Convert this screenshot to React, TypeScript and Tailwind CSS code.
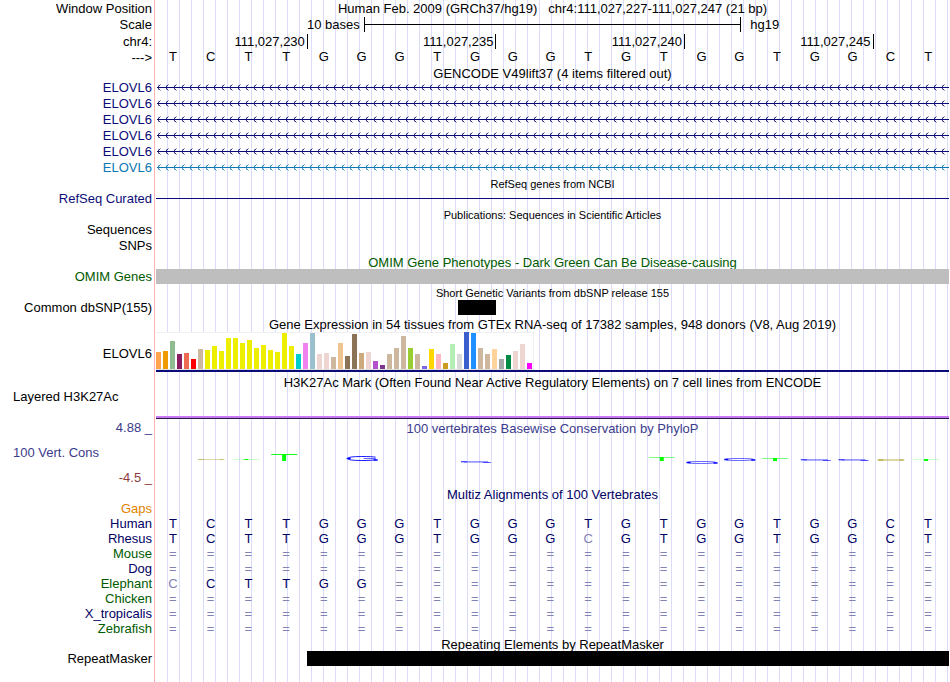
import React, { useId } from "react";

const SEQUENCE = "TCTTGGGTGGGTGTGGTGGCT";

const TICKS = ["111,027,230", "111,027,235", "111,027,240", "111,027,245"];

// [height, colour] for each of the 54 tissues
const TISSUES: [number, string][] = [
  [17, "#ffa54f"], [18, "#ee9a00"], [28, "#8fbc8f"], [15, "#8b1c62"], [16, "#ee6a50"], [10, "#ff0000"],
  [20, "#cdb79e"], [19, "#eeee00"], [23, "#eeee00"], [18, "#eeee00"], [31, "#eeee00"], [31, "#eeee00"],
  [26, "#eeee00"], [29, "#eeee00"], [21, "#eeee00"], [24, "#eeee00"], [19, "#eeee00"], [17, "#eeee00"],
  [36, "#eeee00"], [23, "#eeee00"], [15, "#00cdcd"], [26, "#ee82ee"], [36, "#9ac0cd"], [15, "#eed5d2"],
  [16, "#eed5d2"], [12, "#cdb79e"], [26, "#eec591"], [13, "#8b7355"], [35, "#8b7355"], [16, "#cdaa7d"],
  [17, "#eed5d2"], [8, "#b452cd"], [4, "#7a378b"], [15, "#cdb79e"], [21, "#cdb79e"], [33, "#cdb79e"],
  [21, "#9acd32"], [15, "#cdb79e"], [3, "#7a67ee"], [20, "#ffd700"], [15, "#ffb6c1"], [6, "#cd9b1d"],
  [25, "#b4eeb4"], [15, "#d9d9d9"], [37, "#3a5fcd"], [36, "#1e90ff"], [21, "#cdb79e"], [15, "#cdb79e"],
  [20, "#ffd39b"], [10, "#a6a6a6"], [14, "#008b45"], [18, "#eed5d2"], [25, "#eed5d2"], [6, "#ff00ff"],
];

// conservation marks: base index, kind, top and height inside the track
const MARKS: { at: number; kind: "T" | "G" | "C"; y: number; h: number }[] = [
  { at: 1, kind: "C", y: 24, h: 1 },
  { at: 2, kind: "T", y: 24, h: 1 },
  { at: 3, kind: "T", y: 19, h: 7 },
  { at: 5, kind: "G", y: 21, h: 5 },
  { at: 8, kind: "G", y: 26, h: 2 },
  { at: 13, kind: "T", y: 22, h: 4 },
  { at: 14, kind: "G", y: 26, h: 3 },
  { at: 15, kind: "G", y: 23, h: 3 },
  { at: 16, kind: "T", y: 23, h: 3 },
  { at: 17, kind: "G", y: 24, h: 2 },
  { at: 18, kind: "G", y: 24, h: 2 },
  { at: 19, kind: "C", y: 24, h: 2 },
  { at: 20, kind: "T", y: 24, h: 2 },
];

const NAVY = "text-[#000064]";
const GREEN = "text-[#005a00]";

const ALIGNMENTS = [
  { name: "Gaps", color: "text-[#e18200]", seq: "                     " },
  { name: "Human", color: NAVY, seq: SEQUENCE },
  { name: "Rhesus", color: NAVY, seq: "TCTTGGGTGGGcGTGGTGGCT" },
  { name: "Mouse", color: GREEN, seq: "=====================" },
  { name: "Dog", color: NAVY, seq: "=====================" },
  { name: "Elephant", color: GREEN, seq: "cCTTGG===============" },
  { name: "Chicken", color: GREEN, seq: "=====================" },
  { name: "X_tropicalis", color: NAVY, seq: "=====================" },
  { name: "Zebrafish", color: GREEN, seq: "=====================" },
];

type RowProps = {
  label?: string;
  labelClass?: string;
  className?: string;
  children?: React.ReactNode;
};

const Row = ({ label, labelClass = "text-right", className = "h-4", children }: RowProps) => (
  <div className={`flex ${className}`}>
    <div className={`w-[154px] shrink-0 pr-[2px] whitespace-pre ${labelClass}`}>{label}</div>
    <div className="min-w-0 flex-1 pl-[2px]">{children}</div>
  </div>
);

type TitleProps = { label?: string; labelClass?: string; className?: string; children: React.ReactNode };

const Title = ({ label, labelClass, className = "", children }: TitleProps) => (
  <Row label={label} labelClass={labelClass} className="h-[15px]">
    <h2 className={`pt-px text-center whitespace-pre ${className}`}>{children}</h2>
  </Row>
);

const Intron = ({ className }: { className: string }) => {
  const id = useId();
  return (
    <svg className={`block h-[15px] w-full ${className}`} shapeRendering="crispEdges" aria-hidden="true">
      <defs>
        <pattern id={id} width="8" height="15" patternUnits="userSpaceOnUse">
          <path d="M2 6h1v1h-1z M2 8h1v1h-1z M3 5h1v1h-1z M3 9h1v1h-1z" fill="currentColor" opacity="0.85" />
          <path d="M4 4h1v1h-1z M4 10h1v1h-1z M2 5h1v1h-1z M2 9h1v1h-1z" fill="currentColor" opacity="0.4" />
        </pattern>
      </defs>
      <rect width="100%" height="15" fill={`url(#${id})`} />
      <rect x="1" y="7" width="100%" height="1" fill="currentColor" />
    </svg>
  );
};

const Mark = ({ kind, h }: { kind: "T" | "G" | "C"; h: number }) => {
  if (kind === "T") {
    return (
      <g fill="#00ff00">
        <rect x="-15" width="26" height="1" opacity={h > 4 ? 0.9 : h > 2 ? 0.5 : 0.2} />
        <rect x="-4" width="4" height={h} />
      </g>
    );
  }
  if (kind === "C") {
    return (
      <g fill="#a8a020">
        <rect x="-13" width="27" height={h} opacity="0.4" />
        <rect x="-12" width="5" height={h} opacity="0.5" />
        <rect x="9" width="4" height={h} opacity="0.4" />
      </g>
    );
  }
  if (h < 3) {
    return (
      <g fill="#0000ff">
        <rect x="-14" width="27" height="1" opacity="0.4" />
        <rect x="-11" y="1" width="25" height="1" opacity="0.3" />
        <rect x="-14" width="6" height="1.5" opacity="0.5" />
        <rect x="8" y="1" width="8" height="1" opacity="0.6" />
      </g>
    );
  }
  return (
    <g fill="none" stroke="#0000ff">
      <path
        d={`M14 1.2 Q11 0.5 0 0.5 Q-14 0.5 -14 ${h / 2} Q-14 ${h - 0.5} 0 ${h - 0.5} Q12 ${h - 0.5} 14 ${h - 1.5}`}
        strokeWidth={h > 3 ? 0.9 : 0.6}
      />
      <path d={`M-15 ${h / 2} H-11 M12 ${h - 1} H16`} strokeWidth="1.5" />
      {h > 3 && <path d={`M2 ${h / 2} H14`} strokeWidth="0.6" />}
    </g>
  );
};

const App = () => {
  return (
    <main className="min-h-screen bg-white bg-[linear-gradient(#ffb4b4,#ffb4b4),repeating-linear-gradient(to_right,#dcdcfa_0_1px,transparent_1px_12px)] bg-[size:1px_100%,100%_100%] bg-[position:154px_0,167px_0] bg-no-repeat pr-px font-['Liberation_Sans',Arial,sans-serif] text-[13px] leading-[15px] text-black">
      {/* position, scale and ruler */}
      <Row label="Window Position" className="h-[17px] pt-px">
        <h1 className="text-center whitespace-pre">
          {"Human Feb. 2009 (GRCh37/hg19)   chr4:111,027,227-111,027,247 (21 bp)"}
        </h1>
      </Row>
      <Row label="Scale">
        <div className="grid h-[15px] grid-cols-[11fr_20fr_11fr]">
          <div className="pr-1 text-right">10 bases</div>
          <div className="flex items-center border-x border-black">
            <div className="h-px w-full bg-black"></div>
          </div>
          <div className="pl-[9px]">hg19</div>
        </div>
      </Row>
      <Row label="chr4:" className="h-4 pt-px">
        <div className="grid h-[15px] grid-cols-[4fr_5fr_5fr_5fr_2fr] pl-px text-right">
          {TICKS.map((t) => (
            <div key={t} className="border-r border-black pr-[2px]">{t}</div>
          ))}
        </div>
      </Row>
      <div className="flex h-4 pr-[2px]">
        <div className="w-[154px] shrink-0 pt-px pr-[2px] text-right">{"--->"}</div>
        <div className="grid flex-1 grid-cols-21 text-center">
          {SEQUENCE.split("").map((b, i) => (
            <span key={i}>{b}</span>
          ))}
        </div>
      </div>

      {/* genes */}
      <Title>GENCODE V49lift37 (4 items filtered out)</Title>
      {[1, 2, 3, 4, 5].map((n) => (
        <Row key={n} label="ELOVL6" labelClass="text-right text-[#0c0c78]">
          <Intron className="text-[#0c0c78]" />
        </Row>
      ))}
      <Row label="ELOVL6" labelClass="text-right text-[#0c78b4]">
        <Intron className="text-[#0c78b4]" />
      </Row>
      <Title className="text-[11px]">RefSeq genes from NCBI</Title>
      <Row label="RefSeq Curated" labelClass="text-right text-[#0c0c78]">
        <div className="flex h-[15px] items-center">
          <div className="h-px w-full bg-[#0c0c78]"></div>
        </div>
      </Row>

      {/* publications, phenotypes and variants */}
      <Title className="text-[11px]">Publications: Sequences in Scientific Articles</Title>
      <Row label="Sequences" />
      <Row label="SNPs" />
      <Title className="text-[#005a00]">OMIM Gene Phenotypes - Dark Green Can Be Disease-causing</Title>
      <Row label="OMIM Genes" labelClass="text-right text-[#005a00]">
        <div className="h-[15px] bg-[#bebebe]"></div>
      </Row>
      <Title className="text-[11px]">Short Genetic Variants from dbSNP release 155</Title>
      <Row label="Common dbSNP(155)">
        <div className="grid h-[15px] grid-cols-21">
          <div className="col-start-9 bg-black"></div>
        </div>
      </Row>

      {/* expression */}
      <Title>Gene Expression in 54 tissues from GTEx RNA-seq of 17382 samples, 948 donors (V8, Aug 2019)</Title>
      <Row label="ELOVL6" className="h-[43px] pt-px" labelClass="self-center text-right">
        <div className="flex h-[38px] w-[378px] items-end gap-[2px] border-b border-[#e0e0e0] bg-white shadow-[inset_-1px_1px_#f0f0f0]">
          {TISSUES.map(([h, color], i) => (
            <div key={i} className="w-[5px] shrink-0" style={{ height: h, backgroundColor: color }}></div>
          ))}
        </div>
        <div className="h-[2px] bg-[#0c0c78]"></div>
      </Row>

      {/* regulation */}
      <Title>H3K27Ac Mark (Often Found Near Active Regulatory Elements) on 7 cell lines from ENCODE</Title>
      <Row label="Layered H3K27Ac" labelClass="pl-[13px]" className="h-[31px]">
        <div className="flex h-[30px] flex-col justify-end">
          <div className="h-[2px] bg-[#c878f5]"></div>
          <div className="h-px bg-[#281446]"></div>
        </div>
      </Row>

      {/* conservation */}
      <Title label="4.88 _" labelClass="text-right text-[#3c3c8c]" className="text-[#3c3c8c]">
        100 vertebrates Basewise Conservation by PhyloP
      </Title>
      <div className="flex h-[35px] items-center pr-[2px]">
        <div className="w-[154px] shrink-0 pl-[13px] text-[#3c3c8c]">100 Vert. Cons</div>
        <svg className="h-[35px] min-w-0 flex-1" aria-hidden="true">
          {MARKS.map((m) => (
            <svg key={m.at} x={`${((m.at + 0.5) / 21) * 100}%`} y={m.y} overflow="visible">
              <Mark kind={m.kind} h={m.h} />
            </svg>
          ))}
        </svg>
      </div>
      <Row label="-4.5 _" labelClass="text-right text-[#8c3c3c]" />
      <Title className="text-[#000064]">Multiz Alignments of 100 Vertebrates</Title>
      <div className="pr-[2px]">
        <table className="w-full table-fixed border-collapse">
          <tbody>
            {ALIGNMENTS.map((a) => (
              <tr key={a.name} className="h-[15px]">
                <th scope="row" className={`w-[154px] p-0 pr-[2px] text-right font-normal ${a.color}`}>
                  {a.name}
                </th>
                {a.seq.split("").map((b, i) => (
                  <td
                    key={i}
                    className={`p-0 text-center ${b === "=" || b === "c" ? "text-[#8282b4]" : "text-[#000064]"}`}
                  >
                    {b.toUpperCase()}
                  </td>
                ))}
              </tr>
            ))}
          </tbody>
        </table>
      </div>

      {/* repeats */}
      <Title>Repeating Elements by RepeatMasker</Title>
      <Row label="RepeatMasker" className="h-[15px]">
        <div className="grid h-[15px] grid-cols-21">
          <div className="col-span-17 col-start-5 bg-black"></div>
        </div>
      </Row>
    </main>
  );
};

export default App;
